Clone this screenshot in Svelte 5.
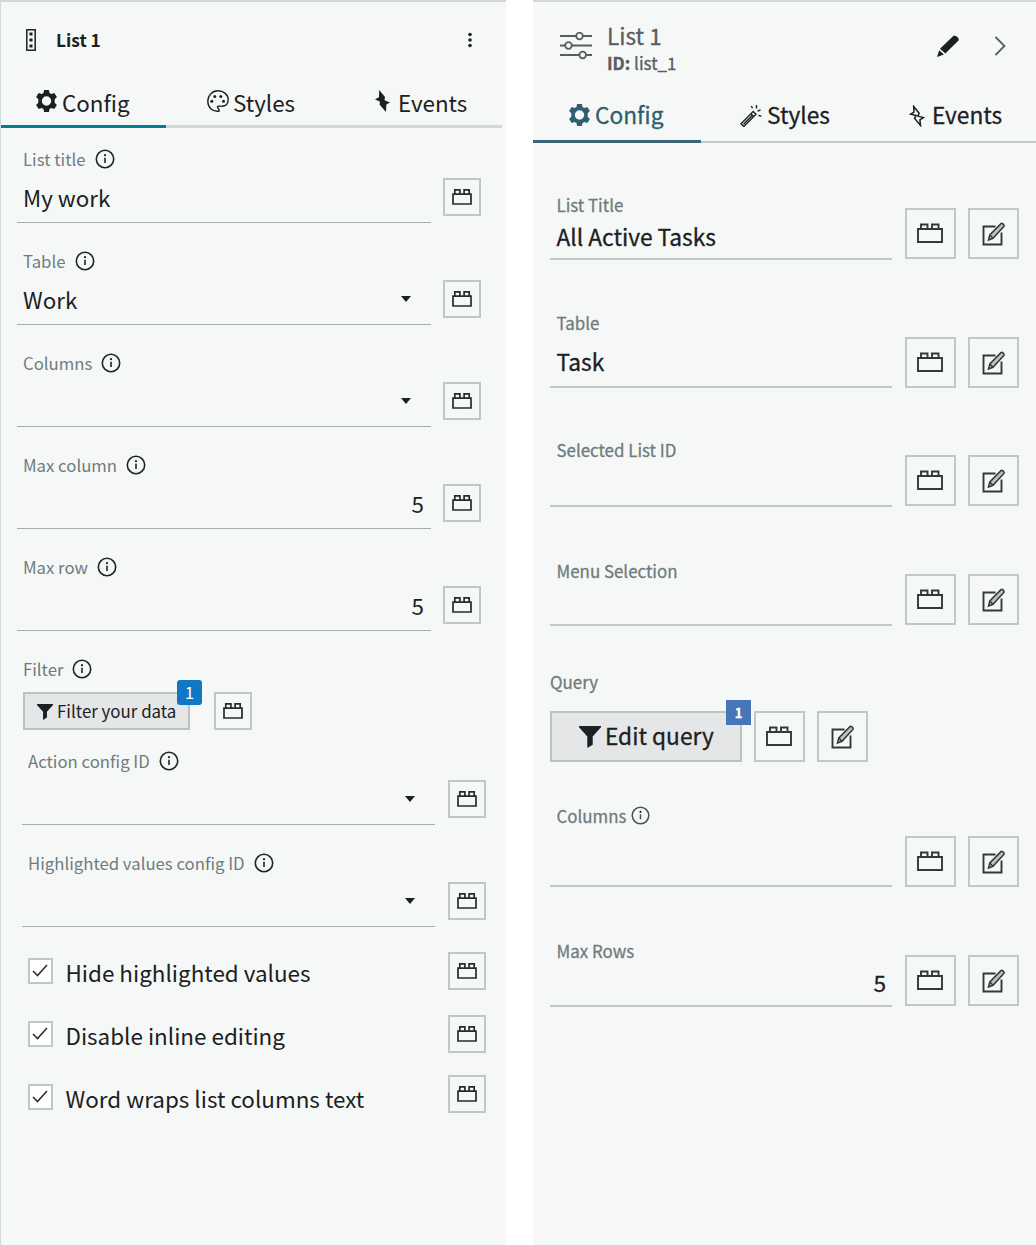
<script>
  const leftFields = [
    { label: 'List title', value: 'My work' },
    { label: 'Table', value: 'Work', select: true },
    { label: 'Columns', select: true },
    { label: 'Max column', value: '5', numeric: true },
    { label: 'Max row', value: '5', numeric: true }
  ];
  const configFields = [
    { label: 'Action config ID', select: true },
    { label: 'Highlighted values config ID', select: true }
  ];
  const toggles = ['Hide highlighted values', 'Disable inline editing', 'Word wraps list columns text'];
  const rightFields = [
    { key: 'title', label: 'List Title', value: 'All Active Tasks' },
    { key: 'table', label: 'Table', value: 'Task' },
    { key: 'selected', label: 'Selected List ID' },
    { key: 'menu', label: 'Menu Selection' }
  ];
  const rightTail = [
    { key: 'columns', label: 'Columns', info: true },
    { key: 'rows', label: 'Max Rows', value: '5', numeric: true }
  ];
</script>

{#snippet info()}
  <svg class="info" viewBox="0 0 20 20">
    <circle cx="10" cy="10" r="8.7" />
    <path d="M10 8.7V14" />
    <circle class="dot" cx="10" cy="6.2" r="1.1" />
  </svg>
{/snippet}

{#snippet gear()}
  <svg class="ic22 gear" viewBox="0 0 22 22">
    <path fill="currentColor" fill-rule="evenodd" d="M8.600 0h4.800l.6 2.900 1.900 1.100 2.900-1.100 2.600 4.200L19.200 9.300v3.400l2.200 2.200-2.600 4.200L15.900 18l-1.900 1.100-.6 2.900H8.600L8 19.100 6.100 18l-2.900 1.100-2.600-4.200 2.200-2.200V9.300L.6 7.100l2.600-4.200L6.100 4 8 2.900zM11 6.300a4.700 4.700 0 1 0 0 9.400 4.700 4.700 0 0 0 0-9.400z" />
  </svg>
{/snippet}

{#snippet smallBrick()}
  <button class="sq small" aria-label="Bind data">
    <svg width="20" height="16" viewBox="0 0 20 16"><path d="M1 5.200h18v9.800H1zM2.800 5V.9h5.100V5M12.100 5V.9h5.100V5" /></svg>
  </button>
{/snippet}

{#snippet bigButtons()}
  <button class="sq big" aria-label="Bind data">
    <svg width="26" height="20" viewBox="0 0 26 20"><path d="M1 6h24v13H1zM4 6V1.500h6.500V6M15 6V1.500h6.500V6" /></svg>
  </button>
  <button class="sq big" aria-label="Edit">
    <svg class="edit" width="24" height="24" viewBox="0 0 24 24">
      <path d="M13.500 4.500H1.500v18h18V10.500" />
      <path class="pen" d="M6.500 18l1.300-5L19 1.600c1-1 3.900 1.500 2.800 2.800L11 16.300zM7.800 13l3.200 3.300" />
    </svg>
  </button>
{/snippet}

{#snippet funnel()}
  <svg viewBox="0 0 22 22"><path fill="currentColor" d="M0 0h22v1.300l-8.300 9.200v8.200L8.300 22V10.500L0 1.300z" /></svg>
{/snippet}

{#snippet leftField(f)}
  <div class="lfield">
    <div class="control">
      <div class="label">{f.label}{@render info()}</div>
      <div class="value" class:numeric={f.numeric}>
        <span>{f.value ?? ''}</span>
        {#if f.select}<i class="caret"></i>{/if}
      </div>
    </div>
    {@render smallBrick()}
  </div>
{/snippet}

{#snippet rightField(f)}
  <div class="rfield {f.key}">
    <div class="control">
      <div class="label">{f.label}{#if f.info}{@render info()}{/if}</div>
      <div class="value" class:numeric={f.numeric}>{f.value ?? ''}</div>
    </div>
    {@render bigButtons()}
  </div>
{/snippet}

<main>
  <section class="left">
    <header>
      <svg class="grip" width="10" height="22" viewBox="0 0 10 22">
        <rect x=".8" y=".8" width="8.400" height="20.400" fill="none" stroke="currentColor" stroke-width="1.500" />
        <path fill="currentColor" d="M3.500 3.500h3v3h-3zM3.500 9.500h3v3h-3zM3.500 15.500h3v3h-3z" />
      </svg>
      <h1>List 1</h1>
      <svg class="kebab" width="4" height="16" viewBox="0 0 4 16" fill="currentColor">
        <circle cx="2" cy="2.500" r="1.800" /><circle cx="2" cy="8" r="1.800" /><circle cx="2" cy="13.500" r="1.800" />
      </svg>
    </header>
    <nav>
      <div class="tab active">{@render gear()}<span>Config</span></div>
      <div class="tab">
        <svg class="ic22" viewBox="0 0 22 22" fill="none" stroke="currentColor" stroke-width="1.400">
          <path d="M12 21.200C5 22 .8 17 .8 11.300.8 5.500 5.300.8 11 .8s10.200 4 10.200 8.800c0 4.600-3 6.600-6 6.600-2.500 0-5.400-.7-4.500 1.400.6 1.200 2.300 2.900 1.300 3.600z" />
          <g fill="currentColor" stroke="none"><circle cx="4.800" cy="11.200" r="1.500" /><circle cx="7.800" cy="6.500" r="1.500" /><circle cx="13.800" cy="6.500" r="1.500" /><circle cx="16.500" cy="11.200" r="1.500" /></g>
        </svg>
        <span>Styles</span>
      </div>
      <div class="tab">
        <svg width="15" height="22" viewBox="0 0 15 22"><path fill="currentColor" d="M4.200 0L10 7l-.5 3.200 5.500 2.400-3.700 1.800-.3 7.600-6.500-7.500.5-2.800L0 9.200l4-2z" /></svg>
        <span>Events</span>
      </div>
    </nav>

    <div class="fields">
      {#each leftFields as f}{@render leftField(f)}{/each}
      <div class="filter">
        <div class="label">Filter{@render info()}</div>
        <div class="row">
          <button class="query">{@render funnel()}<span>Filter your data</span><b class="badge">1</b></button>
          {@render smallBrick()}
        </div>
      </div>
      <div class="indented">
        {#each configFields as f}{@render leftField(f)}{/each}
      </div>
      <div class="toggles">
        {#each toggles as t}
          <div class="toggle">
            <i class="check"><svg width="16" height="13" viewBox="0 0 16 13"><path d="M1 7l4.500 4.500L15 1" /></svg></i>
            <span>{t}</span>
            {@render smallBrick()}
          </div>
        {/each}
      </div>
    </div>
  </section>

  <section class="right">
    <header>
      <svg class="sliders" width="32" height="28" viewBox="0 0 32 28" fill="none" stroke="currentColor" stroke-width="1.800">
        <path d="M0 4h16M23 4h9M0 13.500h5M12 13.500h20M0 23h19M26 23h6" />
        <circle cx="19.500" cy="4" r="3.300" /><circle cx="8.500" cy="13.500" r="3.300" /><circle cx="22.700" cy="23" r="3.300" />
      </svg>
      <div class="heading">
        <h2>List 1</h2>
        <p><b>ID:</b> list_1</p>
      </div>
      <svg class="pencil" width="22" height="22" viewBox="0 0 22 22" fill="currentColor">
        <path d="M3 13.800L16 1.200c2-1.900 7.300 2 5.300 4.500L8.300 18.600z" /><path d="M2.200 15.200l4.700 4.400L0 22z" />
      </svg>
      <svg class="chevron" width="12" height="20" viewBox="0 0 12 20"><path d="M1.500 1l9 9-9 9" /></svg>
    </header>
    <nav>
      <div class="tab active">{@render gear()}<span>Config</span></div>
      <div class="tab">
        <svg class="ic22" viewBox="0 0 22 22" fill="none" stroke="currentColor" stroke-width="1.400">
          <path d="M1 18.800L13.200 6.500l2.800 2.800L3.800 21.500zM11 9l2.600 2.600M3.500 19.200l8.500-8.500" />
          <path d="M11.300 1l1.200 2.300M16.500 0v3.500M20.500 5l-3 1.200M18.500 10.500l3 .6" />
        </svg>
        <span>Styles</span>
      </div>
      <div class="tab">
        <svg width="16" height="22" viewBox="0 0 16 22" fill="none" stroke="currentColor" stroke-width="1.500">
          <path d="M4.700 1.500l5.400 6.700-1.200 2.900 5.400 1.500-3.400 2.200.6 5.600-6-7.100 1.700-2.800-5.500-1.300 3.300-2z" />
        </svg>
        <span>Events</span>
      </div>
    </nav>

    {#each rightFields as f}{@render rightField(f)}{/each}
    <div class="qblock">
      <div class="label">Query</div>
      <div class="row">
        <button class="query">{@render funnel()}<span>Edit query</span><b class="badge">1</b></button>
        {@render bigButtons()}
      </div>
    </div>
    {#each rightTail as f}{@render rightField(f)}{/each}
  </section>
</main>

<style>
  :global(body) { margin: 0; background: #fff; }
  * { box-sizing: border-box; }
  main {
    display: flex;
    justify-content: space-between;
    width: 1036px;
    height: 1245px;
    overflow: hidden;
    font-family: 'Noto Sans CJK SC', 'Noto Sans', sans-serif;
    color: #1b2122;
    white-space: nowrap;
  }
  svg { display: block; flex: none; }
  h1, h2, p { margin: 0; }
  button { font: inherit; color: inherit; padding: 0; background: none; flex: none; }
  section { background: #f6f8f7; height: 1245px; }
  .left { width: 506px; border-left: 1px solid #d3d9d9; border-top: 2px solid #d1d9d8; }
  .right { width: 503px; border-top: 2px solid #d5d8d8; -webkit-text-stroke: 0.3px currentColor; }
  header, nav, .tab, .label, .row, .toggle { display: flex; align-items: center; }
  .ic22 { width: 22px; height: 22px; }
  .gear { width: 23px; }

  .left header { height: 77px; padding: 0 34px 2px 25px; }
  .left h1 { font-size: 17.3px; line-height: 24px; margin-left: 20px; }
  .kebab { margin: 0 0 0 auto; }
  .left nav { height: 49px; width: 501px; }
  .left .tab { height: 49px; width: 168px; padding: 0 0 1px 41px; border-bottom: 3px solid #d1d8d8; gap: 5px; }
  .left .tab.active { width: 165px; padding-left: 34px; gap: 4px; border-color: #047f92; }
  .left .tab:last-child { gap: 8px; padding-left: 41px; }
  .left .tab:nth-child(2) { gap: 4px; }
  .tab span { font-size: 22.400px; line-height: 30px; }
  .left .tab span { padding-top: 1px; }
  .left .tab svg { margin-bottom: 1px; }

  .fields { padding: 12px 0 0 16px; }
  .label { font-size: 16.750px; color: #6f7c7d; }
  .info { width: 20px; height: 20px; fill: none; stroke: #1f2526; stroke-width: 1.6; }
  .info .dot { fill: #1f2526; stroke: none; }
  .lfield { display: flex; height: 102px; gap: 12px; align-items: flex-start; }
  .lfield .control { width: 414px; height: 83px; border-bottom: 1px solid #a4afb1; }
  .left .label { height: 40px; padding: 0 0 2px 6px; gap: 9px; }
  .lfield .value { height: 38px; padding: 0 6px 4px; display: flex; align-items: center; justify-content: space-between; font-size: 22.400px; line-height: 34px; }
  .lfield .value.numeric { justify-content: flex-end; padding-right: 7px; }
  .lfield :global(.sq) { margin-top: 38px; }
  .caret { border: solid transparent; border-width: 6px 5.500px 0; border-top-color: #1b2122; margin-right: 14px; }
  .sq { border: 2px solid #bfc8c8; display: flex; align-items: center; justify-content: center; }
  .sq svg { fill: none; stroke: #262b2c; stroke-width: 1.7; }
  .sq.small { width: 38px; height: 38px; }
  .filter { height: 92px; }
  .filter .row { gap: 24px; margin-top: 2px; padding-left: 6px; }
  .query { position: relative; display: flex; align-items: center; border: 2px solid #bac2c3; background: #e5e6e8; }
  .filter .query { width: 167px; height: 38px; padding: 0 0 1px 12px; gap: 4px; font-size: 16.900px; }
  .filter .query svg { width: 16px; height: 16px; margin-top: 2px; }
  .badge { position: absolute; display: flex; align-items: center; justify-content: center; color: #fff; }
  .filter .badge { left: 152px; top: -14px; width: 25px; height: 25px; padding-bottom: 2px; border-radius: 3px; background: #1077c5; font-size: 17px; font-weight: 400; }
  .indented { padding-left: 5px; }
  .indented .control { width: 413px; }
  .indented .lfield { gap: 13px; }
  .toggles { padding: 6px 0 0 11px; }
  .toggle { height: 38px; margin-bottom: 25px; font-size: 22.450px; width: 458px; }
  .toggle span { margin-left: 12.500px; padding-top: 1px; line-height: 32px; }
  .toggle :global(.sq) { margin-left: auto; }
  .toggle:last-child :global(.sq) { margin-top: -6px; }
  .check { width: 25px; height: 26px; border: 2px solid #bfc8c8; background: #fff; display: flex; align-items: center; justify-content: center; }
  .check svg { fill: none; stroke: #2b3132; stroke-width: 1.6; margin: 0 1px 2px 0; }

  .right header { height: 86px; padding: 1px 30px 0 27px; color: #575e5f; }
  .heading { margin-left: 15px; padding-top: 7px; flex: 1; }
  .right h2 { font-size: 22.600px; font-weight: 400; line-height: 28px; }
  .right p { font-size: 17px; line-height: 26px; }
  .pencil { color: #1b2122; margin-right: 35px; }
  .chevron { fill: none; stroke: #575e5f; stroke-width: 1.8; }
  .right nav { height: 55px; }
  .right .tab { height: 55px; width: 168px; padding: 2px 0 0 39px; gap: 5px; border-bottom: 2px solid #c5c9cb; }
  .right .tab span { font-size: 22.700px; padding-bottom: 1px; }
  .right .tab.active { padding-left: 35px; gap: 4px; color: #2f5e70; border-bottom: 3px solid #3c6478; }
  .right .tab:last-child { gap: 7px; padding-left: 40px; width: 167px; }

  .rfield { display: flex; align-items: flex-end; padding-left: 17px; gap: 13px; }
  .rfield .control { width: 342px; height: 100%; border-bottom: 2px solid #c3c7c7; display: flex; flex-direction: column; justify-content: space-between; }
  .rfield .label, .rfield .value { padding: 0 6px 0 6.500px; }
  .right .label { font-size: 16.900px; line-height: 19px; height: 18px; gap: 5px; }
  .right .info { width: 19px; height: 19px; stroke: #4c5354; }
  .rfield .value { font-size: 22.700px; line-height: 33px; height: 38px; }
  .rfield .value.numeric { text-align: right; line-height: 31px; }
  .sq.big { width: 51px; height: 51px; margin-bottom: 1px; border-color: #c3c7c8; }
  .sq.big + :global(.sq.big) { margin-left: -1px; }
  .sq.big svg { stroke: #33393a; stroke-width: 1.9; margin: 0 1px 2px 0; }
  .sq.big .edit { margin: 0; }
  .sq.big .pen { fill: #bfc2c3; stroke-width: 1.500; }
  .title { height: 65px; margin-top: 52px; }
  .table { height: 75px; margin-top: 53px; }
  .table .value { height: 41px; }
  .table :global(.sq.big) { margin-bottom: 0; }
  .selected { height: 67px; margin-top: 52px; }
  .menu { height: 65px; margin-top: 54px; }
  .qblock { margin: 46px 0 0 17px; }
  .qblock .row { gap: 12px; margin-top: 21px; height: 51px; }
  .qblock :global(.sq.big) { margin-bottom: 0; }
  .qblock .sq.big + :global(.sq.big) { margin-left: 0; }
  .qblock .query { width: 192px; height: 51px; padding: 0 0 2px 27px; gap: 4px; font-size: 22.700px; }
  .qblock .query svg { width: 22px; height: 22px; margin-top: 2px; }
  .qblock .badge { left: 174px; top: -13px; width: 25px; height: 25px; background: #4675b8; font-size: 13px; }
  .columns { height: 81px; margin-top: 44px; }
  .columns :global(.sq.big) { margin-bottom: 0; }
  .rows { height: 66px; margin-top: 54px; }
</style>
